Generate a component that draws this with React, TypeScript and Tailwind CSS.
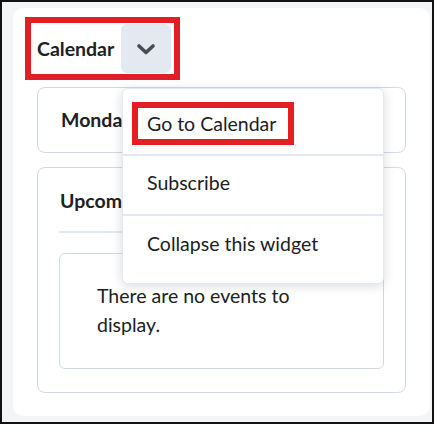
export default function App() {
  return (
    <div className="h-[428px] w-[436px] bg-white font-['Lato','Noto_Sans',sans-serif] text-[#202122]">
      <div className="h-[424px] w-[434px] border-2 border-[#111] bg-[#f3f4f6] pl-[11px] pt-[6px]">
        {/* Widget card */}
        <div className="relative h-[408px] w-[417px] rounded-[10px] bg-white px-6 pt-[9px]">
          {/* Header (annotated) */}
          <div className="-ml-3 flex w-[155px] items-center gap-[7px] border-[6px] border-[#e41e25] py-px pl-[6px] pr-[3px]">
            <h2 className="text-[19.5px] font-bold leading-none">Calendar</h2>
            <button className="flex h-[49px] w-[50px] items-center justify-center rounded-md bg-[#e3e9f1] text-[#494c4e]">
              <svg width="20" height="12" viewBox="0 0 20 12" fill="none">
                <path d="M3 3 L10 9.5 L17 3" stroke="currentColor" strokeWidth="3.6" strokeLinecap="round" strokeLinejoin="round" />
              </svg>
            </button>
          </div>

          {/* Monday */}
          <div className="mt-[7px] flex h-[66px] items-center rounded-lg border border-[#d3d9e3] px-[23px]">
            <span className="text-[19.5px] font-bold">Monday</span>
          </div>

          {/* Upcoming */}
          <div className="mt-[14px] h-[226px] rounded-lg border border-[#d3d9e3] px-[21px]">
            <div className="flex h-[65px] items-center border-b-2 border-[#e3e9f1] pl-px pt-[2px]">
              <span className="text-[19.5px] font-bold">Upcoming events</span>
            </div>
            <div className="mt-[20px] h-[116px] rounded-md border border-[#d3d9e3] pl-[37px] pr-[50px] pt-[27px]">
              <p className="text-[19.5px] leading-[29px]">There are no events to display.</p>
            </div>
          </div>

          {/* Dropdown menu */}
          <div className="absolute left-[109px] top-[80px] w-[262px] rounded-md border border-[#e3e9f1] bg-white py-[7px] shadow-[0_2px_12px_rgba(0,0,0,0.15)]">
            <div className="flex h-[60px] items-center border-b-2 border-[#e3e9f1] pb-1 pl-[9px]">
              <span className="border-[6px] border-[#e41e25] py-[6px] pl-[9px] pr-[12px] text-[19.5px] leading-[19px]">
                Go to Calendar
              </span>
            </div>
            <div className="flex h-[60px] items-center border-b-2 border-[#e3e9f1] pb-1 pl-6 text-[19.5px]">Subscribe</div>
            <div className="flex h-[60px] items-center pb-1 pl-6 text-[19.5px]">Collapse this widget</div>
          </div>
        </div>
      </div>
    </div>
  );
}
